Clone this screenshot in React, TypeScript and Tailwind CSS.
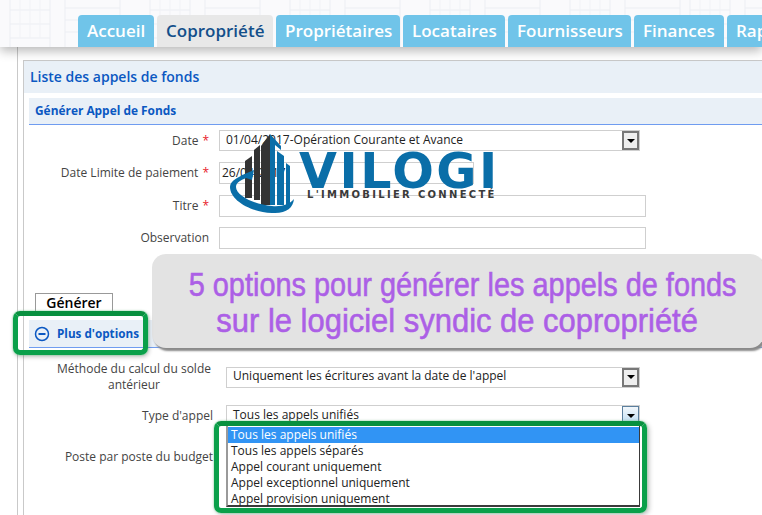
import React from "react";

const tabs = [
  { label: "Accueil", width: "w-[76px]" },
  { label: "Copropriété", width: "w-[116px]", active: true },
  { label: "Propriétaires", width: "w-[124px]" },
  { label: "Locataires", width: "w-[102px]" },
  { label: "Fournisseurs", width: "w-[123px]" },
  { label: "Finances", width: "w-[90px]" },
  { label: "Rapports", width: "w-[90px]" },
];

const dropdownOptions = [
  "Tous les appels unifiés",
  "Tous les appels séparés",
  "Appel courant uniquement",
  "Appel exceptionnel uniquement",
  "Appel provision uniquement",
];

const HeaderArt = () => (
  <svg className="absolute inset-0 h-[47px] w-full" viewBox="0 0 762 47" fill="none" stroke="#eceef3" strokeWidth="1">
    {[10, 150, 290, 430, 570, 690].map((x) => (
      <g key={x}>
        <path d={`M${x} 47V0M${x + 40} 47V0M${x} 10H${x + 40}M${x} 24H${x + 40}M${x} 38H${x + 40}`} />
        <path d={`M${x + 10} 0V38M${x + 20} 0V38M${x + 30} 0V38`} stroke="#f1f2f6" />
        <path d={`M${x + 55} 47V0M${x + 110} 47V0M${x + 55} 8H${x + 110}M${x + 55} 20H${x + 110}M${x + 55} 32H${x + 110}`} />
      </g>
    ))}
  </svg>
);

const SelectArrow = ({ focused }: { focused?: boolean }) => (
  <span
    className={`flex h-full w-[17px] shrink-0 items-center justify-center ${
      focused
        ? "border border-[#5b7f9e] bg-gradient-to-b from-[#f2f7fb] to-[#bcdcf2]"
        : "border-2 border-[#777] bg-[#eeeeee]"
    }`}
  >
    <span className="h-0 w-0 border-x-[4px] border-t-[4px] border-x-transparent border-t-black" />
  </span>
);

const FakeSelect = ({ text, className, focused }: { text: string; className: string; focused?: boolean }) => (
  <div className={`flex h-[21px] items-center justify-between border border-[#cfcfcf] bg-white pl-[6px] text-[12px] text-[#222] ${className}`}>
    <span className="pb-[2px]">{text}</span>
    <SelectArrow focused={focused} />
  </div>
);

const Label = ({ text, required, width }: { text: string; required?: boolean; width: string }) => (
  <div className={`shrink-0 text-right text-[12px] text-[#444] ${width}`}>
    {text}
    {required && <span className="ml-[4px] text-[#e8202a]">*</span>}
  </div>
);

const Logo = () => (
  <div className="absolute left-[228px] top-[132px] h-[82px] w-[270px]">
    <svg className="absolute left-0 top-0" width="76" height="84" viewBox="0 0 76 84">
      <path d="M17 29L24 24V66H17Z" fill="#333" />
      <path d="M26 18L32 13V68H26Z" fill="#333" />
      <path d="M33 14L42 2V73H33Z" fill="#333" />
      <path d="M42 2L53 14V18L47 13V73H42Z" fill="#0a6ea8" />
      <path d="M49 19L56 24V73H49Z" fill="#0a6ea8" />
      <path d="M58 31L62 34V73H58Z" fill="#0a6ea8" />
      <path d="M22 41C10 44 2 49 2 55C2 68 22 80 44 81C58 82 65 76 66 67C62 72 54 75 44 74C28 73 8 64 8 55C8 50 14 47 22 45Z" fill="#0a6ea8" />
      <path d="M12 44L26 38L24 48Z" fill="#0a6ea8" />
    </svg>
    <span className="absolute left-[71px] top-[11px] font-['DejaVu_Sans',sans-serif] text-[49px] font-bold leading-[58px] tracking-[2.5px] text-[#0a6ea8]">
      VILOGI
    </span>
    <span className="absolute left-[79px] top-[57px] whitespace-nowrap font-['DejaVu_Sans',sans-serif] text-[10px] font-bold leading-[12px] tracking-[2.3px] text-[#3a3a3a]">
      L'IMMOBILIER CONNECTÉ
    </span>
  </div>
);

const Banner = () => (
  <div className="absolute left-[152px] top-[254px] flex h-[94px] w-[612px] flex-col items-center justify-center rounded-[14px] bg-[#e3e3e3] pr-[10px] pt-[2px] font-['Liberation_Sans',sans-serif] text-[34px] leading-[36px] text-[#ac5fe6] shadow-[2px_3px_2px_#8a8a8a] [-webkit-text-stroke:0.6px_#ac5fe6]">
    <div className="scale-x-[0.85] whitespace-nowrap pl-[22px]">5 options pour générer les appels de fonds</div>
    <div className="scale-x-[0.91] whitespace-nowrap pl-[10px]">sur le logiciel syndic de copropriété</div>
  </div>
);

const Dropdown = () => (
  <div className="absolute left-[226px] top-[426px] h-[81px] w-[414px] border-b-2 border-r border-l-2 border-[#3a3a3a] border-l-[#9a9a9a] bg-white pt-[1px] text-[12px] leading-[16px] text-[#222]">
    {dropdownOptions.map((option, i) => (
      <div key={option} className={i === 0 ? "bg-[#3194f4] pl-[3px] text-white" : "pl-[3px]"}>
        {option}
      </div>
    ))}
  </div>
);

export default function App() {
  return (
    <div className="relative h-[515px] w-[762px] overflow-hidden bg-white font-['Open_Sans',sans-serif]">
      <header className="relative h-[47px] bg-[#fafafc] shadow-[0_4px_10px_rgba(0,0,0,0.28)]">
        <HeaderArt />
        <nav className="relative flex gap-[3px] whitespace-nowrap pl-[78px] pt-[15px]">
          {tabs.map((tab) => (
            <div
              key={tab.label}
              className={`flex h-[32px] shrink-0 items-center rounded-t-[4px] pl-[9px] text-[17px] font-semibold ${tab.width} ${
                tab.active ? "bg-[#e8e8e8] text-[#134f8a]" : "bg-[#70c4e9] text-white"
              }`}
            >
              {tab.label}
            </div>
          ))}
        </nav>
      </header>

      <main className="ml-[17px] h-[468px] border-l border-[#c9c9c9] pl-[5px] pt-[13px]">
        <section className="h-[500px] border-l border-t border-[#c9c9c9]">
          <h1 className="flex h-[32px] items-center bg-[#e9f0f7] pb-[2px] pl-[6px] text-[14px] font-semibold text-[#0b58c2]">
            Liste des appels de fonds
          </h1>
          <div className="ml-[5px] mt-[5px] flex h-[27px] items-center border-b border-[#6f9cf0] bg-[#e9f0f7] pl-[6px] text-[11.9px] font-bold text-[#0b58c2]">
            Générer Appel de Fonds
          </div>

          <div className="mt-[5px] flex items-center">
            <Label text="Date" required width="w-[185px]" />
            <FakeSelect text="01/04/2017-Opération Courante et Avance" className="ml-[10px] w-[421px]" />
          </div>
          <div className="mt-[11px] flex items-center">
            <Label text="Date Limite de paiement" required width="w-[185px]" />
            <div className="ml-[10px] flex h-[22px] w-[255px] items-center border border-[#cfcfcf] pl-[2px] text-[12px] text-[#222]">
              26/04/2017
            </div>
          </div>
          <div className="mt-[11px] flex items-center">
            <Label text="Titre" required width="w-[185px]" />
            <div className="ml-[10px] h-[22px] w-[427px] border border-[#cfcfcf]" />
          </div>
          <div className="mt-[10px] flex items-center">
            <Label text="Observation" width="w-[185px]" />
            <div className="ml-[10px] h-[22px] w-[427px] border border-[#cfcfcf]" />
          </div>

          <button className="ml-[11px] mt-[44px] block h-[20px] w-[78px] border border-[#999] bg-white text-[14px] font-semibold leading-[18px] text-black">
            Générer
          </button>
          <div className="ml-[5px] mt-[7px] flex h-[28px] items-center gap-[7px] border-b border-[#6f9cf0] bg-[#e9f0f7] pl-[5px] text-[11.7px] font-bold text-[#0b58c2]">
            <svg width="16" height="16" viewBox="0 0 16 16" fill="none" stroke="#0b58c2" strokeWidth="1.5">
              <circle cx="8" cy="8" r="6.5" />
              <path d="M4.5 8h7" strokeWidth="2" />
            </svg>
            Plus d'options
          </div>

          <div className="mt-[13px] flex items-center">
            <div className="ml-[30px] w-[160px] shrink-0 text-center text-[12px] leading-[16px] text-[#444]">
              Méthode du calcul du solde antérieur
            </div>
            <FakeSelect text="Uniquement les écritures avant la date de l'appel" className="ml-[12px] w-[414px]" />
          </div>
          <div className="mt-[12px] flex items-center">
            <Label text="Type d'appel" width="w-[189px]" />
            <FakeSelect text="Tous les appels unifiés" className="ml-[13px] w-[414px]" focused />
          </div>
          <div className="mt-[22px] flex items-center">
            <Label text="Poste par poste du budget" width="w-[189px]" />
          </div>
        </section>
      </main>

      <Logo />
      <Banner />
      <Dropdown />
      <div className="absolute left-[13px] top-[311px] h-[44px] w-[135px] rounded-[7px] border-[5px] border-[#0aa04a] border-t-[#08903f] shadow-[0_0_2px_#6fd08f,1px_2px_4px_rgba(0,0,0,0.25)]" />
      <div className="absolute left-[214px] top-[421px] h-[92px] w-[433px] rounded-[7px] border-[5px] border-[#0aa04a] border-t-[#08903f] shadow-[0_0_2px_#6fd08f,2px_2px_5px_rgba(0,0,0,0.25)]" />
    </div>
  );
}
